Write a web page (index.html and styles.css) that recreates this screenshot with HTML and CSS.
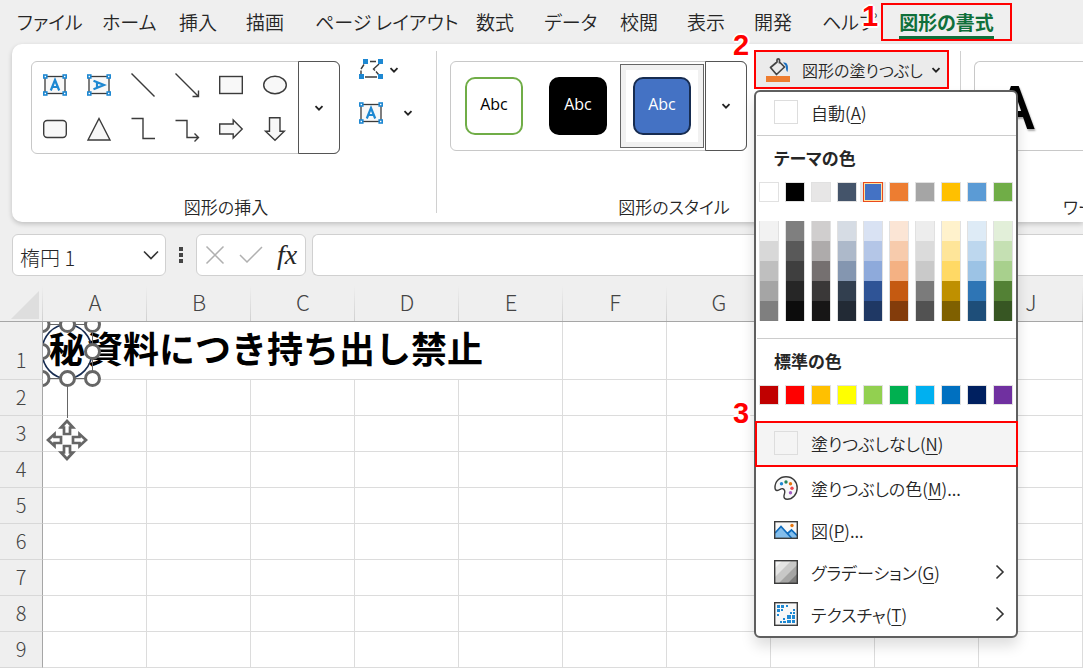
FILE: index.html
```html
<!DOCTYPE html>
<html lang="ja">
<head>
<meta charset="utf-8">
<title>図形の書式</title>
<link rel="stylesheet" href="styles.css">
</head>
<body>
<svg class="defs" aria-hidden="true">
  <defs>
    <symbol id="chev" viewBox="0 0 10 10"><path d="M1.5 3.2 5 6.7 8.500 3.2" fill="none" stroke="#222" stroke-width="1.800"/></symbol>
    <symbol id="more" viewBox="0 0 10 16"><path d="M1.500 1.500 8 8l-6.500 6.500" fill="none" stroke="#333" stroke-width="1.600"/></symbol>
    <symbol id="frame" viewBox="0 0 24 24">
      <rect x="2" y="3.500" width="20" height="17" fill="#f8f8f8" stroke="#3b3b3b" stroke-width="1.300"/>
      <g fill="#fff" stroke="#1e88d2" stroke-width="1.600"><rect x=".8" y="2" width="3" height="3"/><rect x="20.200" y="2" width="3" height="3"/><rect x=".8" y="19" width="3" height="3"/><rect x="20.200" y="19" width="3" height="3"/></g>
    </symbol>
    <symbol id="letter" viewBox="0 0 24 24"><path d="M7.800 17.500 12 7l4.200 10.500M9.200 14h5.600" fill="none" stroke="#1e88d2" stroke-width="2.200"/></symbol>
  </defs>
</svg>

<nav class="tabs">
  <button class="tab">ファイル</button>
  <button class="tab">ホーム</button>
  <button class="tab">挿入</button>
  <button class="tab">描画</button>
  <button class="tab">ページ レイアウト</button>
  <button class="tab">数式</button>
  <button class="tab">データ</button>
  <button class="tab">校閲</button>
  <button class="tab">表示</button>
  <button class="tab">開発</button>
  <button class="tab">ヘルプ</button>
  <button class="tab active"><span class="tab-text">図形の書式</span><b class="step step-1">1</b></button>
</nav>

<section class="ribbon">
  <div class="group insert">
    <div class="controls">
      <div class="gallery">
        <div class="shapes">
          <button aria-label="テキスト ボックス"><svg class="ic"><use href="#frame"/><use href="#letter"/></svg></button>
          <button aria-label="縦書きテキスト ボックス"><svg class="ic"><use href="#frame"/><g transform="rotate(90 12 12)"><use href="#letter"/></g></svg></button>
          <button aria-label="線"><svg class="ic line"><path d="M.5.5 23.500 23.500"/></svg></button>
          <button aria-label="矢印"><svg class="ic line"><path d="M.5.5 23 23M23.500 17.500v6h-6"/></svg></button>
          <button aria-label="四角形"><svg class="ic line"><rect x=".7" y="3.500" width="22.600" height="17"/></svg></button>
          <button aria-label="楕円"><svg class="ic line"><ellipse cx="12" cy="12" rx="11.300" ry="8.700"/></svg></button>
          <button aria-label="角丸四角形"><svg class="ic line"><rect x=".7" y="3.500" width="22.600" height="17" rx="3.500"/></svg></button>
          <button aria-label="三角形"><svg class="ic line"><path d="M12 1.500 23 23H1z"/></svg></button>
          <button aria-label="カギ線コネクタ"><svg class="ic line open"><path d="M.5 1.500H12v20h12"/></svg></button>
          <button aria-label="カギ線矢印コネクタ"><svg class="ic line open"><path d="M.5 3.500H12v17h11M19.500 16.500l4 4-4 4"/></svg></button>
          <button aria-label="右矢印"><svg class="ic line"><path d="M.7 7h13.500V3l9 9-9 9v-4H.7z"/></svg></button>
          <button aria-label="下矢印"><svg class="ic line"><path d="M6.500.7h10.500v13.500h4.300L12 23.200l-9.500-9h4z"/></svg></button>
        </div>
        <button class="drop" aria-label="図形の一覧"><svg class="chev"><use href="#chev"/></svg></button>
      </div>
      <div class="side">
        <button aria-label="図形の編集">
          <svg class="ic" fill="none" stroke="#3b3b3b" stroke-width="1.400"><path d="M5 6.500 2 11M2 12.500V16M11 3.500h6M20 6l-5.500 5 1.500 1.500M17 13.500l2.500 3M6 19h12"/><g fill="#1e88d2" stroke="none"><rect x="4" y="1" width="5" height="5"/><rect x="19" y="1" width="5" height="5"/><rect x="0" y="16" width="5" height="5"/><rect x="19" y="16" width="5" height="5"/></g></svg>
          <svg class="chev"><use href="#chev"/></svg>
        </button>
        <button class="wide" aria-label="テキスト ボックスの描画">
          <svg class="ic"><use href="#frame"/><use href="#letter"/></svg>
          <svg class="chev"><use href="#chev"/></svg>
        </button>
      </div>
    </div>
    <div class="group-name">図形の挿入</div>
  </div>

  <div class="group style">
    <div class="controls">
      <div class="gallery presets">
        <button class="preset"><span class="tile outline">Abc</span></button>
        <button class="preset"><span class="tile black">Abc</span></button>
        <button class="preset selected"><span class="tile blue">Abc</span></button>
        <button class="drop" aria-label="スタイルの一覧"><svg class="chev"><use href="#chev"/></svg></button>
      </div>
      <div class="fill">
        <button class="fill-button">
          <svg class="ic" fill="none"><path d="M13.500 5.500V2c0-1.600-2.500-1.600-2.500 0v2L4.500 9.500l6 7 8-7.500L14 4.500" stroke="#444" stroke-width="1.700" stroke-linejoin="round"/><path d="M17 4.500c4-.8 6 2.500 4.500 9.500-1.600-1-1.500-4-2-6.500z" fill="#1a6fc0"/><rect y="18" width="24" height="6" fill="#ee7d2f"/></svg>
          <span>図形の塗りつぶし</span>
          <svg class="chev"><use href="#chev"/></svg>
        </button>
        <b class="step step-2">2</b>

        <div class="menu">
          <button class="item auto"><i class="box"></i><span>自動(<u>A</u>)</span></button>
          <hr>
          <h2>テーマの色</h2>
          <div class="swatches" id="theme"></div>
          <div class="swatches tints" id="tints"></div>
          <hr>
          <h2>標準の色</h2>
          <div class="swatches" id="standard"></div>
          <button class="item none"><i class="box"></i><span>塗りつぶしなし(<u>N</u>)</span><b class="step step-3">3</b></button>
          <button class="item">
            <svg class="ic" fill="none"><path d="M1 12C.7 5.500 5.500.8 12 .8c6.800 0 11.200 4.800 11.200 11.200 0 6.200-4.600 11.200-10 11.200-2.500 0-3.600-1.500-3.200-3.500.4-2.200 1.300-3.400.6-5.200-.8-2-2.700-2.300-4.400-1.200C4.300 14.800 1.200 15.500 1 12z" fill="#f8f8f8" stroke="#3b3b3b" stroke-width="1.400"/><g><circle cx="7.500" cy="7.800" r="1.700" fill="#1e88d2"/><circle cx="12" cy="6" r="1.700" fill="#23845b"/><circle cx="16.500" cy="7.800" r="1.700" fill="#e8750c"/><circle cx="18" cy="12.200" r="1.700" fill="#f0454c"/><circle cx="16.500" cy="16.700" r="1.700" fill="#a45fc4"/></g></svg>
            <span>塗りつぶしの色(<u>M</u>)...</span>
          </button>
          <button class="item">
            <svg class="ic" fill="none"><rect x=".7" y="3.700" width="22.600" height="16.600" fill="#f8f8f8"/><path d="M1 15 7 8.500 17.500 20H1z" fill="#83beec"/><path d="m13.500 15.500 4-4L23 16v4h-5z" fill="#83beec"/><path d="M1 15 7 8.500 17.500 20M13.500 15.500l4-3.500L23 17.500" stroke="#0f6cbd" stroke-width="1.700"/><circle cx="18" cy="7.500" r="1.700" fill="#e8750c"/><rect x=".7" y="3.700" width="22.600" height="16.600" stroke="#3b3b3b" stroke-width="1.400"/></svg>
            <span>図(<u>P</u>)...</span>
          </button>
          <button class="item">
            <svg class="ic"><path d="M0 0h24v24H0z" fill="#c8c8c7"/><path d="M0 0h18L0 18z" fill="#e4e4e3"/><path d="M0 0h9L0 9z" fill="#f5f5f5"/><path d="M24 4v20H4z" fill="#a5a5a4"/><path d="M24 13v11H13z" fill="#7c7c7b"/><rect x=".7" y=".7" width="22.600" height="22.600" fill="none" stroke="#3b3b3b" stroke-width="1.400"/></svg>
            <span>グラデーション(<u>G</u>)</span><svg class="more"><use href="#more"/></svg>
          </button>
          <button class="item">
            <svg class="ic"><rect x=".7" y=".7" width="22.600" height="22.600" fill="#f8f8f8" stroke="#3b3b3b" stroke-width="1.400"/><path d="M3 3h3v3H3zM7 3h3v3H7zM12 3h2v2h-2zM3 7h3v3H3zM7 7h2v2H7zM3 12h2v2H3zM19 7h2v2h-2zM16 10h2v2h-2zM19 10h2v2h-2zM13 13h4v4h-4zM18 13h3v4h-3zM9 16h2v2H9zM9 19h3v2H9zM13 18h4v3h-4zM18 18h3v3h-3zM6 19h2v2H6z" fill="#1e88d2"/></svg>
            <span>テクスチャ(<u>T</u>)</span><svg class="more"><use href="#more"/></svg>
          </button>
        </div>
      </div>
    </div>
    <div class="group-name">図形のスタイル</div>
  </div>

  <div class="group wordart">
    <div class="controls"><div class="gallery"><button class="art">A</button></div></div>
    <div class="group-name">ワードアートのスタイル</div>
  </div>
</section>

<section class="formula-bar">
  <div class="field name-box">
    <input type="text" value="楕円 1" aria-label="名前ボックス">
    <svg viewBox="0 0 16 10" width="16" height="10"><path d="M1 1.500l7 7 7-7" fill="none" stroke="#333" stroke-width="1.600"/></svg>
  </div>
  <svg class="dots" viewBox="0 0 4 16" fill="#444"><path d="M0 0h4v4H0zM0 6h4v4H0zM0 12h4v4H0z"/></svg>
  <div class="field actions">
    <button aria-label="キャンセル"><svg viewBox="0 0 20 20" width="20" height="20"><path d="m1.500 1.500 17 17m0-17-17 17" stroke="#b0b0b0" stroke-width="1.500"/></svg></button>
    <button aria-label="入力"><svg viewBox="0 0 24 18" width="24" height="18"><path d="m1 9 7 7L23 1" fill="none" stroke="#b0b0b0" stroke-width="1.500"/></svg></button>
    <button class="fx" aria-label="関数の挿入">fx</button>
  </div>
  <input class="field formula" type="text" aria-label="数式バー">
</section>

<main class="sheet">
  <table>
    <thead>
      <tr><th class="corner"><svg viewBox="0 0 28 28" width="28" height="28"><path d="M28 0v28H0z" fill="#dedede"/></svg></th><th>A</th><th>B</th><th>C</th><th>D</th><th>E</th><th>F</th><th>G</th><th>H</th><th>I</th><th>J</th></tr>
    </thead>
    <tbody id="rows">
      <tr class="first"><th>1</th><td class="title" colspan="5">資料につき持ち出し禁止</td><td></td><td></td><td></td><td></td><td></td></tr>
    </tbody>
  </table>
  <svg class="shape" viewBox="43 322 60 142">
    <ellipse cx="67" cy="351.500" rx="25" ry="27" fill="none" stroke="#172c51" stroke-width="1.600"/>
    <text x="67" y="363" text-anchor="middle">秘</text>
    <path d="M42 324.500h50.500v54H42M67.500 379v39" fill="none" stroke="#666"/>
    <g fill="#fff" stroke="#666" stroke-width="3">
      <circle cx="42" cy="324.500" r="7"/><circle cx="67.500" cy="324.500" r="7"/><circle cx="92.500" cy="324.500" r="7"/>
      <circle cx="42" cy="351.500" r="7"/><circle cx="92.500" cy="351.500" r="7"/>
      <circle cx="42" cy="378.500" r="7"/><circle cx="67.500" cy="378.500" r="7"/><circle cx="92.500" cy="378.500" r="7"/>
    </g>
    <g fill="#fff" stroke="#666" stroke-width="2.700">
      <path id="arm" d="M67 421l6 6.500h-3v6.500h-6v-6.500h-3z"/>
      <use href="#arm" transform="rotate(90 67 440)"/><use href="#arm" transform="rotate(180 67 440)"/><use href="#arm" transform="rotate(270 67 440)"/>
    </g>
  </svg>
</main>
<script src="app.js"></script>
</body>
</html>
```
FILE: app.js
```js
const theme = ['#ffffff', '#000000', '#e7e6e6', '#44546a', '#4472c4', '#ed7d31', '#a5a5a5', '#ffc000', '#5b9bd5', '#70ad47'];
const standard = ['#c00000', '#ff0000', '#ffc000', '#ffff00', '#92d050', '#00b050', '#00b0f0', '#0070c0', '#002060', '#7030a0'];
const tints = [
  '#f2f2f2', '#7f7f7f', '#d0cece', '#d6dce4', '#d9e2f3', '#fbe5d5', '#ededed', '#fff2cc', '#deebf6', '#e2efd9',
  '#d8d8d8', '#595959', '#aeabab', '#adb9ca', '#b4c6e7', '#f7cbac', '#dbdbdb', '#fee599', '#bdd7ee', '#c5e0b3',
  '#bfbfbf', '#3f3f3f', '#757070', '#8496b0', '#8eaadb', '#f4b183', '#c9c9c9', '#ffd965', '#9cc3e5', '#a8d08d',
  '#a5a5a5', '#262626', '#3a3838', '#323f4f', '#2f5496', '#c55a11', '#7b7b7b', '#bf9000', '#2e75b5', '#538135',
  '#7f7f7f', '#0c0c0c', '#171616', '#222a35', '#1f3864', '#833c0b', '#525252', '#7f6000', '#1e4e79', '#375623'
];

function fillSwatches(id, colors, selected) {
  const host = document.getElementById(id);
  colors.forEach((color, index) => {
    const swatch = document.createElement('button');
    swatch.className = index === selected ? 'swatch chosen' : 'swatch';
    swatch.style.backgroundColor = color;
    swatch.setAttribute('aria-label', color);
    host.append(swatch);
  });
}

fillSwatches('theme', theme, 4);
fillSwatches('tints', tints, -1);
fillSwatches('standard', standard, -1);

const body = document.getElementById('rows');
for (let n = 2; n <= 9; n++) {
  const row = body.insertRow();
  const head = document.createElement('th');
  head.textContent = n;
  row.append(head);
  for (let c = 0; c < 10; c++) row.insertCell();
}
```
FILE: styles.css
```css
* { box-sizing: border-box; }
html { overflow: hidden; }
body {
  margin: 0;
  background: #efefef;
  color: #262626;
  font-family: "Noto Sans CJK JP", sans-serif;
  font-size: 18px;
  font-weight: 350;
  font-feature-settings: "palt";
}
button, input { font: inherit; color: inherit; font-feature-settings: inherit; }
button { border: 0; padding: 0; background: none; white-space: nowrap; }
svg { display: block; flex: none; }
.defs { display: none; }
.ic { width: 24px; height: 24px; overflow: visible; }
.chev { width: 10px; height: 10px; }
.line { fill: #f8f8f8; stroke: #3b3b3b; stroke-width: 1.4; }
.line.open { fill: none; }

.tabs {
  display: grid;
  grid-template-columns: 85px 77px 67px 69px 161px 68px 76px 67px 67px 68px 59px 131px;
  height: 44px;
  padding-left: 17px;
}
.tab { padding-bottom: 2px; font-size: 19px; text-align: left; }
.tab.active {
  position: relative;
  height: 38px;
  margin-top: 3px;
  padding: 0;
  border: 2px solid #f00;
  color: #0f703b;
  font-weight: 700;
  text-align: center;
}
.tab-text { display: inline-block; height: 34px; line-height: 34px; border-bottom: 3px solid #0f703b; }

.step {
  position: absolute;
  z-index: 3;
  color: #f00;
  font: 700 29px/30px "Liberation Sans", sans-serif;
  text-shadow: 2px 0 #fff, -2px 0 #fff, 0 2px #fff, 0 -2px #fff, 1px 1px 2px #fff;
}
.step-1 { left: -21px; top: -4px; }
.step-2 { left: -21px; top: -20px; }
.step-3 { left: -24px; top: -25px; }

.ribbon {
  position: relative;
  z-index: 2;
  display: flex;
  height: 178px;
  margin-left: 12px;
  border-radius: 10px 0 0 10px;
  background: #fff;
  box-shadow: 0 2px 5px #0003;
}
.group { position: relative; display: flex; flex-direction: column; flex: none; padding-top: 6px; }
.group + .group::before { content: ""; position: absolute; left: 0; top: 7px; height: 162px; border-left: 1px solid #d0d0d0; }
.insert { width: 424px; }
.style { width: 524px; }
.wordart { flex: 1; min-width: 0; }
.controls { display: flex; height: 144px; }
.group-name { line-height: 26px; text-align: center; white-space: nowrap; font-size: 17px; }
.insert .group-name { padding-left: 4px; }
.style .group-name { padding-right: 48px; }
.wordart .group-name { padding-left: 103px; overflow: hidden; text-align: left; }

.gallery { display: flex; border: 1px solid #c8c8c8; border-radius: 6px; }
.insert .gallery { height: 93px; margin: 11px 0 0 19px; }
.shapes { display: grid; grid-template: repeat(2, 44px) / repeat(6, 44px); padding: 1px; }
.shapes button, .drop { display: flex; align-items: center; justify-content: center; }
.drop { width: 42px; margin: -1px; border: 1px solid #555; border-radius: 0 6px 6px 0; }
.insert .drop { margin-left: 0; }
.side { display: flex; flex-direction: column; gap: 17px; margin: 7px 0 0 19px; }
.side button { display: flex; align-items: center; gap: 6px; height: 26px; }
.side .wide { gap: 20px; }

.presets { height: 90px; margin: 11px 0 0 14px; padding-left: 1px; }
.preset { display: flex; align-items: center; justify-content: center; width: 84px; height: 84px; margin-top: 2px; }
.preset.selected { border: 1px solid #666; box-shadow: inset 0 0 0 5px #f1f1f1; }
.tile { width: 58px; height: 58px; border-radius: 10px; font: 16px/50px "Open Sans", sans-serif; }
.outline { border: 2px solid #70ad47; color: #000; }
.black { border: 2px solid #000; background: #000; color: #fff; }
.blue { border: 2px solid #172c51; background: #4472c4; color: #fff; }
.presets .drop { margin-left: 1px; }

.fill { position: relative; width: 195px; margin-left: 7px; }
.fill-button {
  display: flex;
  align-items: center;
  gap: 12px;
  width: 100%;
  height: 39px;
  padding: 0 7px 0 10px;
  border: 2px solid #f00;
  background: #ebebeb;
  font-size: 16px;
}
.fill-button { gap: 8px; padding-right: 12px; }
.fill-button .ic { margin-right: 4px; }
.fill-button .chev { margin-left: auto; }

.menu {
  position: absolute;
  left: 0;
  top: 40px;
  z-index: 2;
  width: 264px;
  padding-left: 1px;
  border: 2px solid #5f5f5f;
  border-radius: 6px;
  background: #fff;
  box-shadow: 0 8px 14px #0002;
}
.item { display: flex; align-items: center; gap: 13px; width: 100%; height: 42px; padding: 0 11px 2px 17px; font-size: 17px; }
.item u { text-underline-offset: 3px; text-decoration-thickness: 1px; }
.box { width: 24px; height: 24px; border: 1px solid #ddd; }
.auto { margin-bottom: 1px; }
.none { position: relative; margin: 18px 0 3px; background: #f4f4f4; outline: 2px solid #f00; }
.more { width: 10px; height: 16px; margin-left: auto; }
.menu hr { height: 1px; margin: 0; border: 0; background: #ccc; }
.menu h2 { margin: 0; padding: 0 0 2px 17px; font-size: 17px; line-height: 44px; }
.swatches { display: grid; grid-template-columns: repeat(10, 20px); column-gap: 6px; padding-left: 2px; }
.swatch { height: 20px; border: 1px solid #e1e1e1; }
.chosen { border-color: #ea4a1b; box-shadow: inset 0 0 0 1px #ffe2a0, -3px 0 #eaeaea, 3px 0 #eaeaea; }
.tints { margin: 19px 0 17px; }
.tints .swatch { border-width: 0 1px; }

.wordart .gallery { flex: 1; height: 90px; margin: 11px 0 0 14px; border-right: 0; border-radius: 6px 0 0 6px; }
.art { padding-left: 20px; color: #000; font: 600 60px/88px "Open Sans", sans-serif; text-shadow: 1px 2px 2px #0005; }

.formula-bar { display: flex; align-items: center; height: 42px; margin: 12px 0 0 12px; }
.field { height: 42px; border: 1px solid #d0d0d0; border-radius: 6px; background: #fff; }
.name-box { display: flex; align-items: center; width: 154px; padding: 0 6px 0 7px; }
.name-box input { flex: 1; min-width: 0; padding: 4px 0 0; border: 0; outline: 0; background: none; font-size: 20px; font-weight: 300; }
.dots { width: 4px; height: 16px; margin: 0 13px; }
.actions { display: flex; align-items: center; gap: 14px; width: 110px; padding: 0 8px; }
.fx { font: italic 400 28px/36px "Liberation Serif", serif; }
.formula { flex: 1; min-width: 0; margin-left: 6px; border-right: 0; border-radius: 6px 0 0 6px; }

.sheet { position: relative; }
.sheet table { width: 100%; min-width: 1083px; table-layout: fixed; border-spacing: 0; background: #fff; }
.sheet th { padding: 0; background: #efefef; color: #444; font-size: 22px; font-weight: 300; line-height: 30px; }
.sheet thead th {
  height: 46px;
  padding-top: 4px;
  border-bottom: 1px solid #a6a6a6;
  background: linear-gradient(#efefef, #cfcfcf) right 10px / 1px 36px no-repeat #efefef;
}
.sheet thead .corner { width: 43px; padding: 13px 0 0 11px; }
.sheet tbody th { padding-bottom: 2px; border-right: 1px solid #a6a6a6; border-bottom: 1px solid #d8d8d8; font-size: 20px; }
.sheet td { height: 36px; padding: 0; border: solid #dcdcdc; border-width: 0 1px 1px 0; }
.sheet .first th { vertical-align: bottom; padding-bottom: 4px; }
.sheet .title { height: 58px; padding: 0 0 6px 44px; color: #000; font-size: 36px; font-weight: 700; line-height: 51px; white-space: nowrap; font-feature-settings: normal; }
.shape { position: absolute; left: 43px; top: 46px; width: 60px; height: 142px; }
.shape text { font-size: 36px; font-weight: 700; fill: #000; }
```
